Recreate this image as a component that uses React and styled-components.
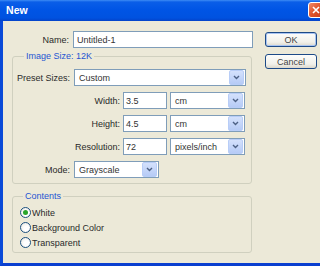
import styled, { createGlobalStyle } from "styled-components";

const GlobalStyle = createGlobalStyle`
  html, body {
    margin: 0;
    padding: 0;
    background: #ece9d8;
  }
  body {
    width: 320px;
    height: 266px;
    overflow: hidden;
    font-family: "Liberation Sans", Arial, sans-serif;
    font-size: 9px;
    color: #2a2a2a;
  }
`;

const Window = styled.div`
  width: 332px;
  height: 266px;
  display: flex;
  flex-direction: column;
  background: #ece9d8;
`;

const TitleBar = styled.div`
  height: 21px;
  flex: none;
  display: flex;
  align-items: center;
  padding: 0 8px 1px 6px;
  box-sizing: border-box;
  background: linear-gradient(#3d8cf5 0, #0a5ee8 2px, #0055e5 45%, #0052e0 85%, #0443c9 100%);
`;

const Title = styled.span`
  color: #fff;
  font-weight: bold;
  font-size: 10.5px;
  letter-spacing: 0.1px;
`;

const Close = styled.div`
  margin-left: auto;
  width: 14px;
  height: 14px;
  border: 1px solid #fff;
  border-radius: 3px;
  background: linear-gradient(135deg, #ee8a6a, #e0532a 50%, #c8401c);
  display: flex;
  align-items: center;
  justify-content: center;
`;

const Frame = styled.div`
  flex: 1;
  display: flex;
  border-left: 3px solid #0a4ad8;
  border-bottom: 3px solid #0a3fd0;
`;

const Main = styled.div`
  width: 241px;
  padding: 10px 0 0 9px;
  display: flex;
  flex-direction: column;
`;

const Row = styled.div`
  display: flex;
  align-items: center;
  height: 17px;
  gap: ${(p) => p.$gap || 4}px;
`;

const Label = styled.span`
  width: ${(p) => p.$w}px;
  text-align: right;
  flex: none;
`;

const Input = styled.div`
  width: ${(p) => p.$w}px;
  height: 17px;
  box-sizing: border-box;
  border: 1px solid #7f9db9;
  background: #fff;
  display: flex;
  align-items: center;
  padding-left: ${(p) => p.$pad || 2}px;
  color: #333;
`;

const Select = styled(Input)`
  padding-left: 4px;
  padding-right: 1px;
  justify-content: space-between;
`;

const Arrow = styled.div`
  width: 13px;
  height: 13px;
  border: 1px solid #b8cdf7;
  border-radius: 2px;
  background: linear-gradient(#d4e1fc, #b6cbf6);
  display: flex;
  align-items: center;
  justify-content: center;
`;

const Group = styled.fieldset`
  margin: ${(p) => p.$top}px 0 0 0;
  padding: ${(p) => p.$pt}px 0 ${(p) => p.$pb}px ${(p) => p.$pl}px;
  width: 240px;
  box-sizing: border-box;
  border: 1px solid #d0d0bf;
  border-radius: 3px;
  display: flex;
  flex-direction: column;
  gap: ${(p) => p.$gap}px;
`;

const Legend = styled.legend`
  color: #1f55d2;
  padding: 0 2px;
  margin-left: ${(p) => p.$ml}px;
  line-height: 11px;
`;

const RadioRow = styled.label`
  display: flex;
  align-items: center;
  height: 15px;
  gap: 1px;
`;

const Radio = styled.span`
  width: 11px;
  height: 11px;
  box-sizing: border-box;
  border-radius: 50%;
  border: 1px solid #1c5180;
  background: radial-gradient(circle at 60% 60%, #fff 30%, #e6e4dc 100%);
  display: flex;
  align-items: center;
  justify-content: center;
  &::after {
    content: "";
    width: 5px;
    height: 5px;
    border-radius: 50%;
    background: ${(p) => (p.$on ? "#2aa52a" : "transparent")};
  }
`;

const Side = styled.div`
  margin-left: 12px;
  padding-top: 11px;
  display: flex;
  flex-direction: column;
  gap: 7px;
`;

const Button = styled.div`
  width: 52px;
  height: 15px;
  box-sizing: border-box;
  border: 1px solid #1d4a87;
  border-radius: 3px;
  background: linear-gradient(#fdfdfb, #f1f0ea 70%, #dcd8cc);
  box-shadow: ${(p) => (p.$default ? "inset 0 0 0 1px #a8c4f2" : "none")};
  display: flex;
  align-items: center;
  justify-content: center;
  color: #444;
`;

const Chevron = () => (
  <svg width="7" height="5" viewBox="0 0 7 5">
    <path d="M1 1 L3.5 3.5 L6 1" fill="none" stroke="#4d6185" strokeWidth="1.4" />
  </svg>
);

const Drop = ({ w, children }) => (
  <Select $w={w}>
    <span>{children}</span>
    <Arrow>
      <Chevron />
    </Arrow>
  </Select>
);

const Measure = ({ label, value, unit }) => (
  <Row $gap={3}>
    <Label $w={107}>{label}</Label>
    <Input $w={44}>{value}</Input>
    <Drop w={75}>{unit}</Drop>
  </Row>
);

export default function App() {
  return (
    <Window>
      <GlobalStyle />
      <TitleBar>
        <Title>New</Title>
        <Close>
          <svg width="8" height="8" viewBox="0 0 8 8">
            <path d="M1 1 L7 7 M7 1 L1 7" stroke="#fff" strokeWidth="1.6" />
          </svg>
        </Close>
      </TitleBar>
      <Frame>
        <Main>
          <Row>
            <Label $w={57}>Name:</Label>
            <Input $w={180} $pad={3}>Untitled-1</Input>
          </Row>
          <Group $top={3} $pt={7} $pb={5} $pl={0} $gap={6}>
            <Legend $ml={11}>Image Size: 12K</Legend>
            <Row>
              <Label $w={57}>Preset Sizes:</Label>
              <Drop w={172}>Custom</Drop>
            </Row>
            <Measure label="Width:" value="3.5" unit="cm" />
            <Measure label="Height:" value="4.5" unit="cm" />
            <Measure label="Resolution:" value="72" unit="pixels/inch" />
            <Row>
              <Label $w={57}>Mode:</Label>
              <Drop w={85}>Grayscale</Drop>
            </Row>
          </Group>
          <Group $top={7} $pt={3} $pb={2} $pl={7} $gap={0}>
            <Legend $ml={3}>Contents</Legend>
            <RadioRow>
              <Radio $on />
              White
            </RadioRow>
            <RadioRow>
              <Radio />
              Background Color
            </RadioRow>
            <RadioRow>
              <Radio />
              Transparent
            </RadioRow>
          </Group>
        </Main>
        <Side>
          <Button $default>OK</Button>
          <Button>Cancel</Button>
        </Side>
      </Frame>
    </Window>
  );
}
